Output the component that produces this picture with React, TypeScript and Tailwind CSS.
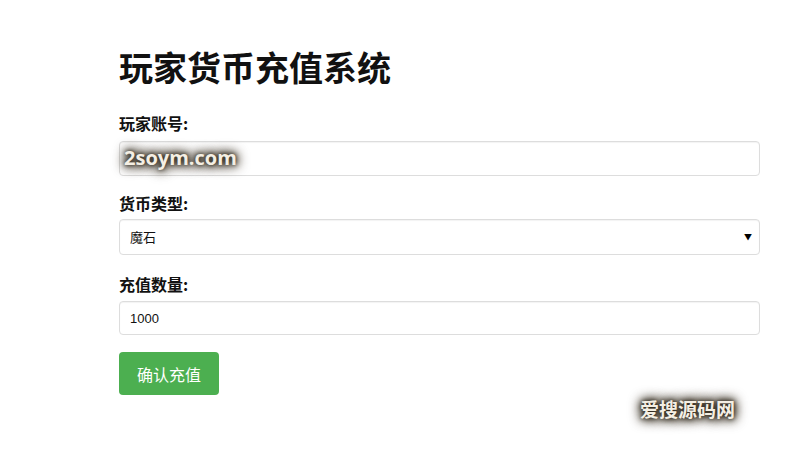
import React from "react";

const App = () => {
    return (
        <div className="relative w-[800px] h-[451px] bg-white overflow-hidden font-['Microsoft_YaHei','Noto_Sans_CJK_SC',sans-serif] text-[#111]">
            <div className="pl-[119px] pt-[46px] w-[760px]">
                {/* title */}
                <h1 className="text-[34px] leading-[42px] font-bold">玩家货币充值系统</h1>

                {/* account */}
                <label className="block mt-[24px] text-[16px] leading-[22px] font-bold">玩家账号:</label>
                <div className="relative mt-[7px]">
                    <input
                        type="text"
                        defaultValue=""
                        className="w-full h-[35px] border border-[#ddd] rounded-[4px] px-[10px] text-[14px] outline-none shadow-[inset_0_1px_1px_rgba(0,0,0,0.05)]"
                    />
                    {/* watermark */}
                    <span className="absolute left-[2px] top-[4px] px-[3px] text-[20px] leading-[26px] font-bold text-[#f4efe4] font-['Open_Sans',sans-serif] [text-shadow:0_0_4px_#2b2418,0_0_8px_#2b2418,0_0_12px_#3b3222,0_0_14px_#3b3222]">
                        2soym.com
                    </span>
                </div>

                {/* currency type */}
                <label className="block mt-[16px] text-[16px] leading-[22px] font-bold">货币类型:</label>
                <div className="relative mt-[5px]">
                    <select className="w-full h-[36px] appearance-none border border-[#ddd] rounded-[4px] px-[10px] text-[13px] bg-white outline-none shadow-[inset_0_1px_1px_rgba(0,0,0,0.05)]">
                        <option>魔石</option>
                        <option>金币</option>
                        <option>钻石</option>
                    </select>
                    <span className="absolute right-[8px] top-[11px] text-[8px] leading-[14px] text-black pointer-events-none">▼</span>
                </div>

                {/* amount */}
                <label className="block mt-[18px] text-[16px] leading-[22px] font-bold">充值数量:</label>
                <input
                    type="text"
                    defaultValue="1000"
                    className="block mt-[6px] w-full h-[34px] border border-[#ddd] rounded-[4px] px-[10px] text-[13px] font-['Liberation_Sans',sans-serif] outline-none shadow-[inset_0_1px_1px_rgba(0,0,0,0.05)]"
                />

                {/* submit */}
                <button className="mt-[17px] w-[100px] h-[43px] rounded-[4px] bg-[#4caf50] text-white text-[16px]">
                    确认充值
                </button>
            </div>

            {/* bottom-right watermark */}
            <span className="absolute left-[640px] top-[397px] text-[19px] leading-[24px] font-bold text-[#f4efe4] [text-shadow:0_0_4px_#2b2418,0_0_8px_#2b2418,0_0_12px_#3b3222,0_0_14px_#3b3222]">
                爱搜源码网
            </span>
        </div>
    );
};

export default App;
